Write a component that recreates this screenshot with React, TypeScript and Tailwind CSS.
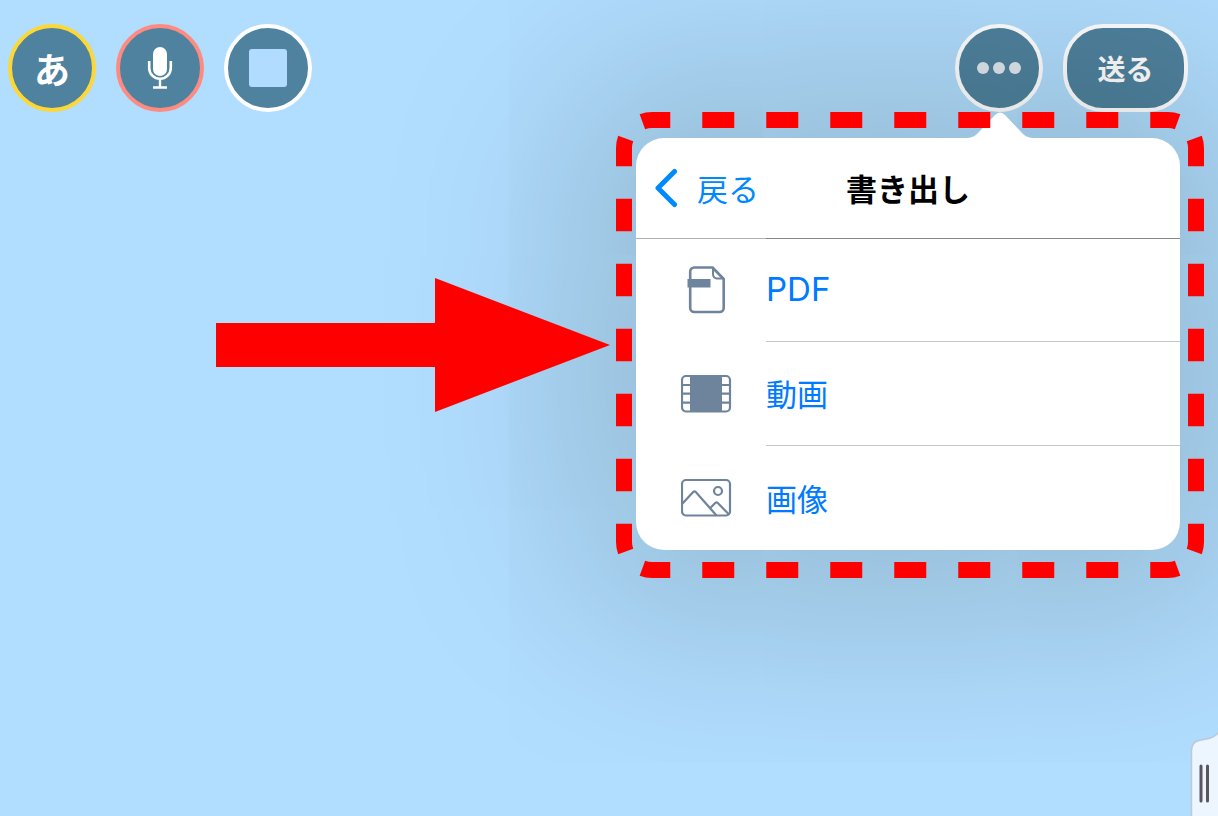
import React from "react";

const PdfIcon = () => (
  <svg width="52" height="50" viewBox="0 0 52 50" fill="none" stroke="#6e849c" strokeWidth="2.6" aria-hidden="true">
    <path d="M9.2 6.5a4 4 0 0 1 4-4H31.5L42.7 14V43a4 4 0 0 1-4 4H13.2a4 4 0 0 1-4-4Z" strokeLinejoin="round" />
    <path d="M32 2.5V9.5A4.5 4.5 0 0 0 36 13.5H43" strokeWidth="2" />
    <path d="M6.5 14H29.5V22.5H6.5Z" fill="#6e849c" stroke="none" />
  </svg>
);

const MovieIcon = () => (
  <svg width="52" height="50" viewBox="0 0 52 50" fill="none" stroke="#6e849c" strokeWidth="2.2" aria-hidden="true">
    <rect x="1" y="7" width="48" height="35.5" rx="4" />
    <path d="M9 7.5H41V42.5H9Z" fill="#6e849c" stroke="none" />
    <path d="M2 16H9M2 24.7H9M2 33.7H9M41 16H49M41 24.7H49M41 33.7H49" />
  </svg>
);

const ImageIcon = () => (
  <svg width="52" height="50" viewBox="0 0 52 50" fill="none" stroke="#6e849c" strokeWidth="2.2" aria-hidden="true">
    <rect x="1" y="7" width="48" height="35.5" rx="4" />
    <circle cx="37" cy="18" r="4" />
    <path d="M1.5 30.5L12.2 19Q13.5 17.7 14.8 19L35.5 42.5" />
    <path d="M29.5 34.8L34.2 30Q35.5 28.8 36.8 30L48 41.5" />
  </svg>
);

const menuItems = [
  { label: "PDF", icon: <PdfIcon /> },
  { label: "動画", icon: <MovieIcon /> },
  { label: "画像", icon: <ImageIcon /> },
];

const roundButton = "flex size-22 items-center justify-center rounded-full border-4 bg-[#4f829e] text-white";

const Toolbar = () => (
  <header className="flex items-center justify-between pt-6 pr-[30px] pl-2">
    <div className="flex gap-5">
      <button className={`${roundButton} border-[#fdd835] text-4xl font-bold`}>あ</button>
      <button className={`${roundButton} border-[#ff8a80]`} aria-label="マイク">
        <svg width="26" height="44" viewBox="0 0 26 44" fill="none" stroke="white" strokeWidth="2.4" aria-hidden="true">
          <rect x="6" y="1" width="14" height="29" rx="7" fill="white" stroke="none" />
          <path d="M2.2 15V22A10.8 10.8 0 0 0 23.8 22V15" strokeWidth="2.6" />
          <path d="M13 32V41M6 41.5H20" />
        </svg>
      </button>
      <button className={`${roundButton} border-white`} aria-label="停止">
        <span className="size-[38px] rounded-[3px] bg-[#b1dcff]" />
      </button>
    </div>
    <div className="flex gap-5">
      <button className={`${roundButton} gap-1 border-white`} aria-label="その他">
        <span className="size-3 rounded-full bg-[#dfe8ee]" />
        <span className="size-3 rounded-full bg-[#dfe8ee]" />
        <span className="size-3 rounded-full bg-[#dfe8ee]" />
      </button>
      <button className="h-22 w-[125px] rounded-[40px] border-4 border-white bg-[#4f829e] text-[28px] font-bold text-white">
        送る
      </button>
    </div>
  </header>
);

// Dashed frame and arrow that point out the export menu
const Highlight = () => (
  <>
    <svg
      className="pointer-events-none absolute -top-[26px] -left-5"
      width="588"
      height="466"
      viewBox="0 0 588 466"
      fill="none"
      stroke="#ff0000"
      strokeWidth="16"
      aria-hidden="true"
    >
      <g strokeDasharray="32" strokeDashoffset="4">
        <path d="M26.4 9.7A28 28 0 0 1 36 8H552A28 28 0 0 1 561.6 9.7" />
        <path d="M26.4 456.3A28 28 0 0 0 36 458H552A28 28 0 0 0 561.6 456.3" />
      </g>
      <g strokeDasharray="32.5" strokeDashoffset="4.5">
        <path d="M9.7 26.4A28 28 0 0 0 8 36V430A28 28 0 0 0 9.7 439.6" />
        <path d="M578.3 26.4A28 28 0 0 1 580 36V430A28 28 0 0 1 578.3 439.6" />
      </g>
    </svg>
    <svg
      className="pointer-events-none absolute top-[140px] right-[570px]"
      width="394"
      height="134"
      viewBox="0 0 394 134"
      fill="#ff0000"
      aria-hidden="true"
    >
      <path d="M0 45H219V0L394 67L219 134V89H0Z" />
    </svg>
  </>
);

const ExportMenu = () => (
  <div className="absolute top-[138px] right-[38px] w-[544px] rounded-[28px] bg-white shadow-[0_0_200px_60px_rgba(0,10,0,0.18)]">
    <svg className="absolute -top-[26px] right-[146px]" width="68" height="27" viewBox="0 0 68 27" fill="white" aria-hidden="true">
      <path d="M0 27V26Q7 26 11 22L29 3Q34 -2 39 3L57 22Q61 26 68 26V27Z" />
    </svg>
    <div className="grid h-[100px] grid-cols-[1fr_auto_1fr] items-center">
      <button className="flex items-center gap-5 pl-[18px] text-[31px] text-[#0088ff]">
        <svg width="23" height="40" viewBox="0 0 23 40" fill="none" stroke="currentColor" strokeWidth="5" strokeLinecap="round" strokeLinejoin="round" aria-hidden="true">
          <path d="M20.5 3.5L4 20L20.5 36.5" />
        </svg>
        戻る
      </button>
      <h1 className="text-[31px] font-bold text-black">書き出し</h1>
    </div>
    <div className="flex">
      <div className="h-px w-[130px] bg-[#b0b0b0]" />
      <div className="h-px flex-1 bg-[#868686]" />
    </div>
    <ul className="-mt-px">
      {menuItems.map((item, i) => (
        <li key={item.label}>
          <button className="flex w-full items-center text-left text-[31px] text-[#007aff]">
            <span className="flex w-[130px] items-center pl-[45px]">{item.icon}</span>
            <span
              className={`flex h-[104px] flex-1 items-center ${
                item.label === "PDF" ? "font-['Inter',sans-serif] text-[33px]" : ""
              } ${i < menuItems.length - 1 ? "border-b border-[#c6c6c8]" : ""}`}
            >
              {item.label}
            </span>
          </button>
        </li>
      ))}
    </ul>
    <Highlight />
  </div>
);

const SideHandle = () => (
  <button className="absolute right-0 bottom-0" aria-label="パネルを開く">
    <svg width="28" height="84" viewBox="0 0 28 84" fill="none" aria-hidden="true">
      <path
        d="M1.5 86V19Q1.5 10 9 8.5L20 6.2Q25 5 29 0V86Z"
        fill="#edf6fe"
        stroke="#bccad6"
        strokeWidth="1.5"
      />
      <path d="M11 34V69M17.5 34V69" stroke="#58585a" strokeWidth="3" strokeLinecap="round" />
    </svg>
  </button>
);

export default function App() {
  return (
    <main className="relative min-h-screen overflow-hidden bg-[#b1ddfe] font-['Noto_Sans_CJK_JP',sans-serif]">
      <Toolbar />
      <ExportMenu />
      <SideHandle />
    </main>
  );
}
